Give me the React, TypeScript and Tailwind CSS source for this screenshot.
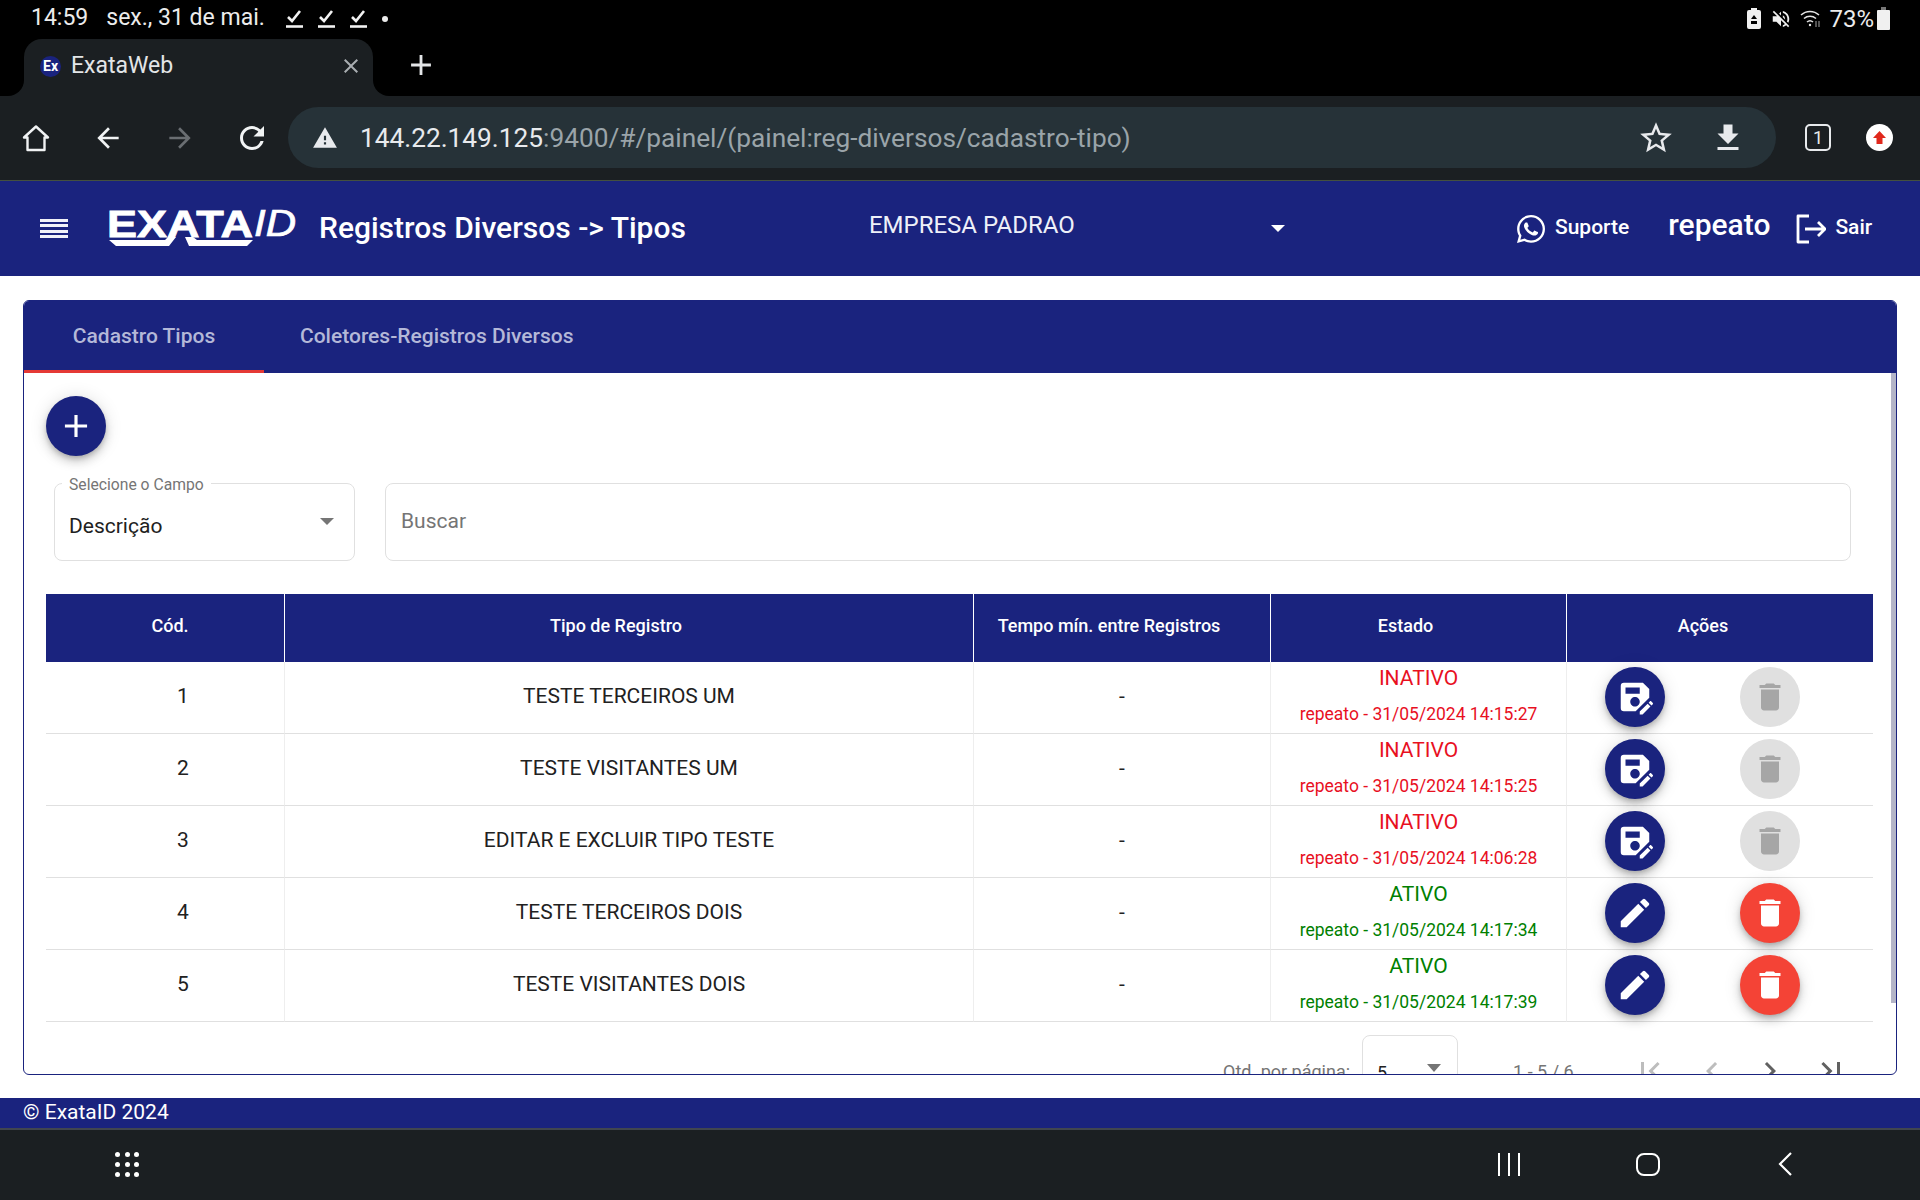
import { FaWhatsapp } from 'react-icons/fa'
import {
  MdAdd,
  MdArrowBack,
  MdArrowForward,
  MdChevronLeft,
  MdChevronRight,
  MdClose,
  MdDelete,
  MdEdit,
  MdFileDownload,
  MdFirstPage,
  MdLastPage,
  MdRefresh,
  MdSaveAs,
  MdStarBorder,
  MdVolumeOff,
  MdWarning,
} from 'react-icons/md'

const ROWS = [
  { id: 1, name: 'TESTE TERCEIROS UM', active: false, log: 'repeato - 31/05/2024 14:15:27' },
  { id: 2, name: 'TESTE VISITANTES UM', active: false, log: 'repeato - 31/05/2024 14:15:25' },
  { id: 3, name: 'EDITAR E EXCLUIR TIPO TESTE', active: false, log: 'repeato - 31/05/2024 14:06:28' },
  { id: 4, name: 'TESTE TERCEIROS DOIS', active: true, log: 'repeato - 31/05/2024 14:17:34' },
  { id: 5, name: 'TESTE VISITANTES DOIS', active: true, log: 'repeato - 31/05/2024 14:17:39' },
]

const FAB_SHADOW =
  'shadow-[0_3px_5px_-1px_rgba(0,0,0,0.2),0_6px_10px_0_rgba(0,0,0,0.14),0_1px_18px_0_rgba(0,0,0,0.12)]'

function CheckNote() {
  return (
    <svg width="19" height="19" viewBox="0 0 19 19" fill="none" stroke="#f2f2f2" strokeWidth="2.6">
      <path d="M3 8l4 4 8-10" />
      <path d="M1 17.5h17" />
    </svg>
  )
}

function WifiData() {
  return (
    <svg className="ml-[8px]" width="21" height="19" viewBox="0 0 21 19" fill="none" stroke="#e4e4e4" strokeWidth="1.5">
      <path d="M1 6a13 13 0 0 1 18 0M4 9.5a9 9 0 0 1 12 0M7 13a4.500 4.500 0 0 1 6 0" />
      <circle cx="10" cy="16" r="1.200" fill="#e4e4e4" stroke="none" />
      <path d="M16 12v6M19 18v-6" stroke="#8a8a8a" strokeWidth="1.200" />
    </svg>
  )
}

function StatusBar() {
  return (
    <div className="flex h-[39px] items-center bg-black pb-[2px] pl-[31px] text-[23px] text-[#ececec]">
      <span>14:59</span>
      <span className="ml-[18px]">sex., 31 de mai.</span>
      <div className="ml-[20px] flex gap-[13px]">
        <CheckNote />
        <CheckNote />
        <CheckNote />
      </div>
      <div className="ml-[14px] h-[6px] w-[6px] rounded-full bg-[#ececec]" />
      <div className="ml-auto flex items-center pr-[30px]">
        <svg width="14" height="21" viewBox="0 0 14 21" fill="#f0f0f0">
          <path d="M4 0h6v2h2a2 2 0 0 1 2 2v15a2 2 0 0 1-2 2H2a2 2 0 0 1-2-2V4a2 2 0 0 1 2-2h2z" />
          <path d="M7 7l3 4H4zM4 13h6v3H4z" fill="#000" />
        </svg>
        <MdVolumeOff className="ml-[9px] text-[22px] text-[#f0f0f0]" />
        <WifiData />
        <span className="ml-[8px] text-[24px] leading-none">73%</span>
        <svg className="ml-[3px]" width="13" height="23" viewBox="0 0 13 23" fill="#f0f0f0">
          <path d="M4 0h5v3H4z" fill="#777" />
          <path d="M1 3h11a1 1 0 0 1 1 1v18a1 1 0 0 1-1 1H1a1 1 0 0 1-1-1V4a1 1 0 0 1 1-1z" />
        </svg>
      </div>
    </div>
  )
}

function TabStrip() {
  return (
    <div className="flex h-[57px] items-center bg-black pl-[24px]">
      <div className="relative flex h-full w-[349px] items-center rounded-t-[18px] bg-[#1b1f22] pb-[3px] pl-[16px] pr-[10px]">
        <div className="absolute bottom-0 left-[-16px] h-[16px] w-[16px] bg-[#1b1f22]">
          <div className="h-full w-full rounded-br-[16px] bg-black" />
        </div>
        <div className="absolute bottom-0 right-[-16px] h-[16px] w-[16px] bg-[#1b1f22]">
          <div className="h-full w-full rounded-bl-[16px] bg-black" />
        </div>
        <div className="flex h-[21px] w-[21px] items-center justify-center rounded-full bg-[#1a237e] text-[14px] font-bold text-white">
          Ex
        </div>
        <span className="ml-[10px] text-[23px] text-[#e3e5e7]">ExataWeb</span>
        <MdClose className="ml-auto text-[24px] text-[#a9adb1]" />
      </div>
      <MdAdd className="mb-[6px] ml-[31px] text-[34px] text-[#e3e5e7]" />
    </div>
  )
}

function HomeIcon() {
  return (
    <svg width="28" height="28" viewBox="0 0 28 28" fill="none" stroke="#f1f3f4" strokeWidth="2.4" strokeLinejoin="round">
      <path d="M14 2.5L26 13.5h-3.5V26h-17V13.5H2z" />
    </svg>
  )
}

function ToolbarSlot({ children }: { children: React.ReactNode }) {
  return <div className="flex w-[72px] items-center justify-center">{children}</div>
}

function Toolbar() {
  return (
    <div className="flex h-[85px] items-center border-b border-[#44503f] bg-[#1b1f22] pb-[1px]">
      <ToolbarSlot>
        <HomeIcon />
      </ToolbarSlot>
      <ToolbarSlot>
        <MdArrowBack className="text-[32px] text-[#f1f3f4]" />
      </ToolbarSlot>
      <ToolbarSlot>
        <MdArrowForward className="text-[32px] text-[#6a6e72]" />
      </ToolbarSlot>
      <ToolbarSlot>
        <MdRefresh className="text-[36px] text-[#f1f3f4]" />
      </ToolbarSlot>
      <div className="flex h-[61px] w-[1488px] items-center rounded-full bg-[#263238] pl-[24px]">
        <MdWarning className="text-[26px] text-[#e8eaed]" />
        <div className="ml-[22px] pt-[3px] text-[26.25px] text-[#9aa4a9]">
          <span className="text-[#e8eaed]">144.22.149.125</span>:9400/#/painel/(painel:reg-diversos/cadastro-tipo)
        </div>
        <MdStarBorder className="ml-auto text-[38px] text-[#e8eaed]" />
        <MdFileDownload className="ml-[35px] mr-[30px] text-[36px] text-[#e8eaed]" />
      </div>
      <div className="ml-[29px] flex h-[27px] w-[26px] items-center justify-center rounded-[5px] border-2 border-[#e8eaed] text-[18px] text-[#e8eaed]">
        1
      </div>
      <div className="ml-[35px] flex h-[27px] w-[27px] items-center justify-center rounded-full bg-white">
        <svg width="15" height="15" viewBox="0 0 15 15" fill="#e0281c">
          <path d="M7.5 1L14 8H10.5v6h-6V8H1z" />
        </svg>
      </div>
    </div>
  )
}

function ExataLogo() {
  return (
    <svg width="190" height="50" viewBox="0 -5 190 50" fill="white">
      <text
        x="0"
        y="28"
        fontFamily="Liberation Sans"
        fontWeight="700"
        fontSize="36"
        textLength="146"
        lengthAdjust="spacingAndGlyphs"
        stroke="white"
        strokeWidth="0.8"
      >
        EXATA
      </text>
      <text
        x="147"
        y="27"
        fontFamily="Liberation Sans"
        fontStyle="italic"
        fontSize="36"
        textLength="42"
        lengthAdjust="spacingAndGlyphs"
        stroke="white"
        strokeWidth="0.7"
      >
        ID
      </text>
      <path d="M2 31h56l3-3h8l-7 9H9zM78 28h8l4 3h56l-6 6H82z" />
    </svg>
  )
}

function AppHeader() {
  return (
    <header className="flex h-[95px] items-center bg-[#1a237e] text-white">
      <div className="ml-[40px] flex w-[28px] flex-col gap-[2.5px]">
        <div className="h-[3px] bg-[#f0f1f8]" />
        <div className="h-[3px] bg-[#f0f1f8]" />
        <div className="h-[3px] bg-[#f0f1f8]" />
        <div className="h-[3px] bg-[#f0f1f8]" />
      </div>
      <div className="ml-[39px] flex">
        <ExataLogo />
      </div>
      <h1 className="mb-[3px] ml-[22px] text-[30px] font-medium">Registros Diversos -&gt; Tipos</h1>
      <div className="ml-[183px] flex w-[416px] items-center">
        <span className="mb-[7px] text-[24px] text-[#eef0f8]">EMPRESA PADRAO</span>
        <div className="ml-auto h-0 w-0 border-x-[7px] border-t-[7px] border-x-transparent border-t-white" />
      </div>
      <FaWhatsapp className="ml-[230px] text-[32px]" />
      <span className="mb-[1px] ml-[8px] text-[21px] font-medium">Suporte</span>
      <span className="mb-[8px] ml-[39px] text-[30px] font-medium">repeato</span>
      <svg className="ml-[26px]" width="30" height="30" viewBox="0 0 30 30" fill="none" stroke="white" strokeWidth="2.8" strokeLinejoin="round">
        <path d="M13 2H2v26h11M9 15h20M22 8l7 7-7 7" />
      </svg>
      <span className="mb-[1px] ml-[9px] text-[21px] font-medium">Sair</span>
    </header>
  )
}

function SearchBar() {
  return (
    <div className="ml-[8px] mt-[27px] flex h-[78px] gap-[30px]">
      <div className="relative flex w-[301px] items-start rounded-[8px] border border-[#e0e0e0] px-[14px] pt-[28px]">
        <span className="absolute left-[7px] top-[-9px] bg-white px-[7px] text-[15.7px] leading-[20px] text-[#757575]">
          Selecione o Campo
        </span>
        <span className="text-[21px] leading-[28px] text-[#212121]">Descrição</span>
        <div className="ml-auto mr-[6px] mt-[6px] h-0 w-0 border-x-[7px] border-t-[7px] border-x-transparent border-t-[#757575]" />
      </div>
      <div className="flex w-[1466px] items-start rounded-[8px] border border-[#e0e0e0] px-[15px] pt-[23px] text-[21px] leading-[28px] text-[#757575]">
        Buscar
      </div>
    </div>
  )
}

function Fab({ tone, children }: { tone: 'navy' | 'red' | 'off'; children: React.ReactNode }) {
  if (tone === 'off') {
    return (
      <div className="flex h-[60px] w-[60px] items-center justify-center rounded-full bg-[#e0e0e0] text-[36px] text-[#a6a6a6]">
        {children}
      </div>
    )
  }
  return (
    <div
      className={
        tone === 'navy'
          ? `flex h-[60px] w-[60px] items-center justify-center rounded-full bg-[#1a237e] text-[38px] text-white ${FAB_SHADOW}`
          : `flex h-[60px] w-[60px] items-center justify-center rounded-full bg-[#f44336] text-[36px] text-white ${FAB_SHADOW}`
      }
    >
      {children}
    </div>
  )
}

function DataTable() {
  return (
    <table className="mt-[33px] w-[1827px] table-fixed border-separate border-spacing-0 text-[21px] text-[#212121]">
      <colgroup>
        <col className="w-[239px]" />
        <col className="w-[689px]" />
        <col className="w-[297px]" />
        <col className="w-[296px]" />
        <col className="w-[306px]" />
      </colgroup>
      <thead>
        <tr className="h-[68px] bg-[#1a237e] text-[18px] font-medium text-white">
          <th className="border-r border-white pb-[5px] pl-[36px] pr-[26px] font-medium">Cód.</th>
          <th className="border-r border-white pb-[5px] pr-[26px] font-medium">Tipo de Registro</th>
          <th className="border-r border-white pb-[5px] pr-[26px] font-medium">Tempo mín. entre Registros</th>
          <th className="border-r border-white pb-[5px] pr-[26px] font-medium">Estado</th>
          <th className="pb-[5px] pr-[34px] font-medium">Ações</th>
        </tr>
      </thead>
      <tbody>
        {ROWS.map((row) => (
          <tr key={row.id} className="h-[72px]">
            <td className="border-b border-r border-b-[#e0e0e0] border-r-[#eeeeee] pb-[1px] pl-[36px] text-center">{row.id}</td>
            <td className="border-b border-r border-b-[#e0e0e0] border-r-[#eeeeee] pb-[1px] text-center">{row.name}</td>
            <td className="border-b border-r border-b-[#e0e0e0] border-r-[#eeeeee] pb-[1px] text-center">-</td>
            <td
              className={
                row.active
                  ? 'border-b border-r border-b-[#e0e0e0] border-r-[#eeeeee] text-[#008000]'
                  : 'border-b border-r border-b-[#e0e0e0] border-r-[#eeeeee] text-[#e8101f]'
              }
            >
              <div className="flex h-[71px] flex-col items-center pt-[3px]">
                <span className="leading-[26px]">{row.active ? 'ATIVO' : 'INATIVO'}</span>
                <span className="mt-[11px] text-[17.5px] leading-[24px]">{row.log}</span>
              </div>
            </td>
            <td className="border-b border-b-[#e0e0e0] pb-[2px]">
              <div className="flex pl-[38px]">
                <Fab tone="navy">{row.active ? <MdEdit /> : <MdSaveAs />}</Fab>
                <div className="ml-[75px]">
                  <Fab tone={row.active ? 'red' : 'off'}>
                    <MdDelete />
                  </Fab>
                </div>
              </div>
            </td>
          </tr>
        ))}
      </tbody>
    </table>
  )
}

function Paginator() {
  return (
    <div className="ml-[1177px] mt-[13px] flex h-[80px] items-start text-[18px] text-[#757575]">
      <span className="mt-[25px] leading-[24px]">Qtd. por página:</span>
      <div className="ml-[12px] flex h-[78px] w-[96px] items-start rounded-[8px] border border-[#e0e0e0] px-[14px] pt-[25px] leading-[24px] text-[#212121]">
        5
        <div className="ml-auto mr-[2px] mt-[3px] h-0 w-0 border-x-[7px] border-t-[8px] border-x-transparent border-t-[#757575]" />
      </div>
      <span className="ml-[55px] mt-[25px] leading-[24px]">1 - 5 / 6</span>
      <MdFirstPage className="ml-[58px] mt-[18px] text-[36px] text-[#bdbdbd]" />
      <MdChevronLeft className="ml-[26px] mt-[18px] text-[36px] text-[#bdbdbd]" />
      <MdChevronRight className="ml-[22px] mt-[18px] text-[36px] text-[#616161]" />
      <MdLastPage className="ml-[25px] mt-[18px] text-[36px] text-[#616161]" />
    </div>
  )
}

function MainCard() {
  return (
    <div className="relative mx-[23px] mt-[24px] h-[775px] overflow-hidden rounded-[6px] border border-[#1a237e] bg-white">
      <div className="flex h-[72px] bg-[#1a237e] text-[21px] font-medium text-[#b4b8d8]">
        <div className="flex w-[240px] items-center justify-center border-b-[3px] border-[#e53935] pt-[3px]">
          Cadastro Tipos
        </div>
        <div className="flex items-center px-[36px]">Coletores-Registros Diversos</div>
      </div>
      <div className="absolute right-0 top-[72px] h-[630px] w-[5px] bg-[#b4b5c8]" />
      <div className="pl-[22px] pt-[23px]">
        <div className={`flex h-[60px] w-[60px] items-center justify-center rounded-full bg-[#1a237e] text-[38px] text-white ${FAB_SHADOW}`}>
          <MdAdd />
        </div>
        <SearchBar />
        <DataTable />
        <Paginator />
      </div>
    </div>
  )
}

function NavBar() {
  return (
    <div className="flex h-[72px] items-center border-t-2 border-[#41464f] bg-[#1b1f22] pb-[2px]">
      <div className="ml-[115px] grid w-[24px] grid-cols-3 gap-[5px]">
        {Array.from({ length: 9 }, (_, i) => (
          <div key={i} className="h-[5px] w-[5px] rounded-full bg-white" />
        ))}
      </div>
      <div className="ml-[1359px] flex w-[22px] justify-between">
        <div className="h-[23px] w-[2px] bg-white" />
        <div className="h-[23px] w-[2px] bg-white" />
        <div className="h-[23px] w-[2px] bg-white" />
      </div>
      <div className="ml-[116px] h-[23px] w-[24px] rounded-[8px] border-2 border-white" />
      <svg className="ml-[117px]" width="16" height="26" viewBox="0 0 16 26" fill="none" stroke="white" strokeWidth="2.2">
        <path d="M14 2L3 13l11 11" />
      </svg>
    </div>
  )
}

export default function App() {
  return (
    <div className="flex h-[1200px] flex-col overflow-hidden bg-white [font-family:Roboto,sans-serif]">
      <StatusBar />
      <TabStrip />
      <Toolbar />
      <AppHeader />
      <MainCard />
      <div className="mt-[23px] flex h-[30px] items-center bg-[#1a237e] pl-[23px] text-[21px] text-white">
        © ExataID 2024
      </div>
      <NavBar />
    </div>
  )
}
